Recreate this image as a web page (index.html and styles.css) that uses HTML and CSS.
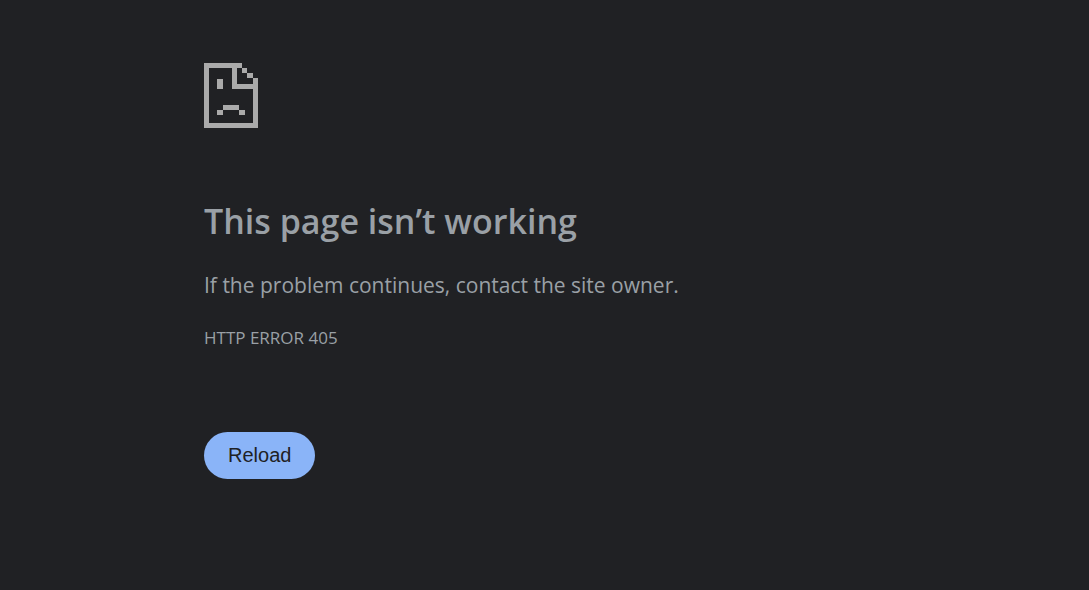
FILE: index.html
```html
<!DOCTYPE html>
<html lang="en">
<head>
<meta charset="utf-8">
<meta name="viewport" content="width=device-width, initial-scale=1">
<title>This page isn’t working</title>
<link rel="stylesheet" href="styles.css">
</head>
<body class="page">
<main class="error">
<svg class="error-icon" viewBox="0 0 54 65" shape-rendering="crispEdges" aria-hidden="true">
<path fill="currentColor" d="M0 0H38V5H33V21H49V15H54V65H0ZM5 5V60H49V26H28V5ZM38 5H43V10H38ZM43 10H49V15H43ZM13 16H19V26H13ZM19 42H35V47H19ZM13 47H19V52H13ZM35 47H41V52H35Z" fill-rule="evenodd"/>
</svg>
<h1 class="error-title">This page isn’t working</h1>
<p class="error-text">If the problem continues, contact the site owner.</p>
<p class="error-code">HTTP ERROR 405</p>
<button class="reload" type="button">Reload</button>
</main>
</body>
</html>
```
FILE: styles.css
```css
.page {
  margin: 0;
  background: #202124;
  color: #9aa0a6;
  font-family: "Segoe UI", "Open Sans", "Noto Sans", sans-serif;
}

.error {
  max-width: 681px;
  margin: 0 auto;
  padding: 63px 24px;
}

@media (min-width: 729px) {
  .error {
    padding: 63px 0;
  }
}

.error-icon {
  display: block;
  width: 54px;
  height: 65px;
  color: #aaa;
}

.error-title {
  margin: 70px 0 0;
  font-size: 34px;
  font-weight: 600;
  line-height: 46px;
}

.error-text {
  margin: 24px 0 0;
  font-size: 21px;
  line-height: 34px;
}

.error-code {
  margin: 22px 0 0;
  font-size: 17px;
  line-height: 28px;
}

.reload {
  margin: 80px 0 0;
  padding: 12px 24px;
  border: 0;
  border-radius: 24px;
  background: #8ab4f8;
  color: #202124;
  font-family: "Liberation Sans", Arial, sans-serif;
  font-size: 20px;
  line-height: 23px;
  cursor: pointer;
}
```
